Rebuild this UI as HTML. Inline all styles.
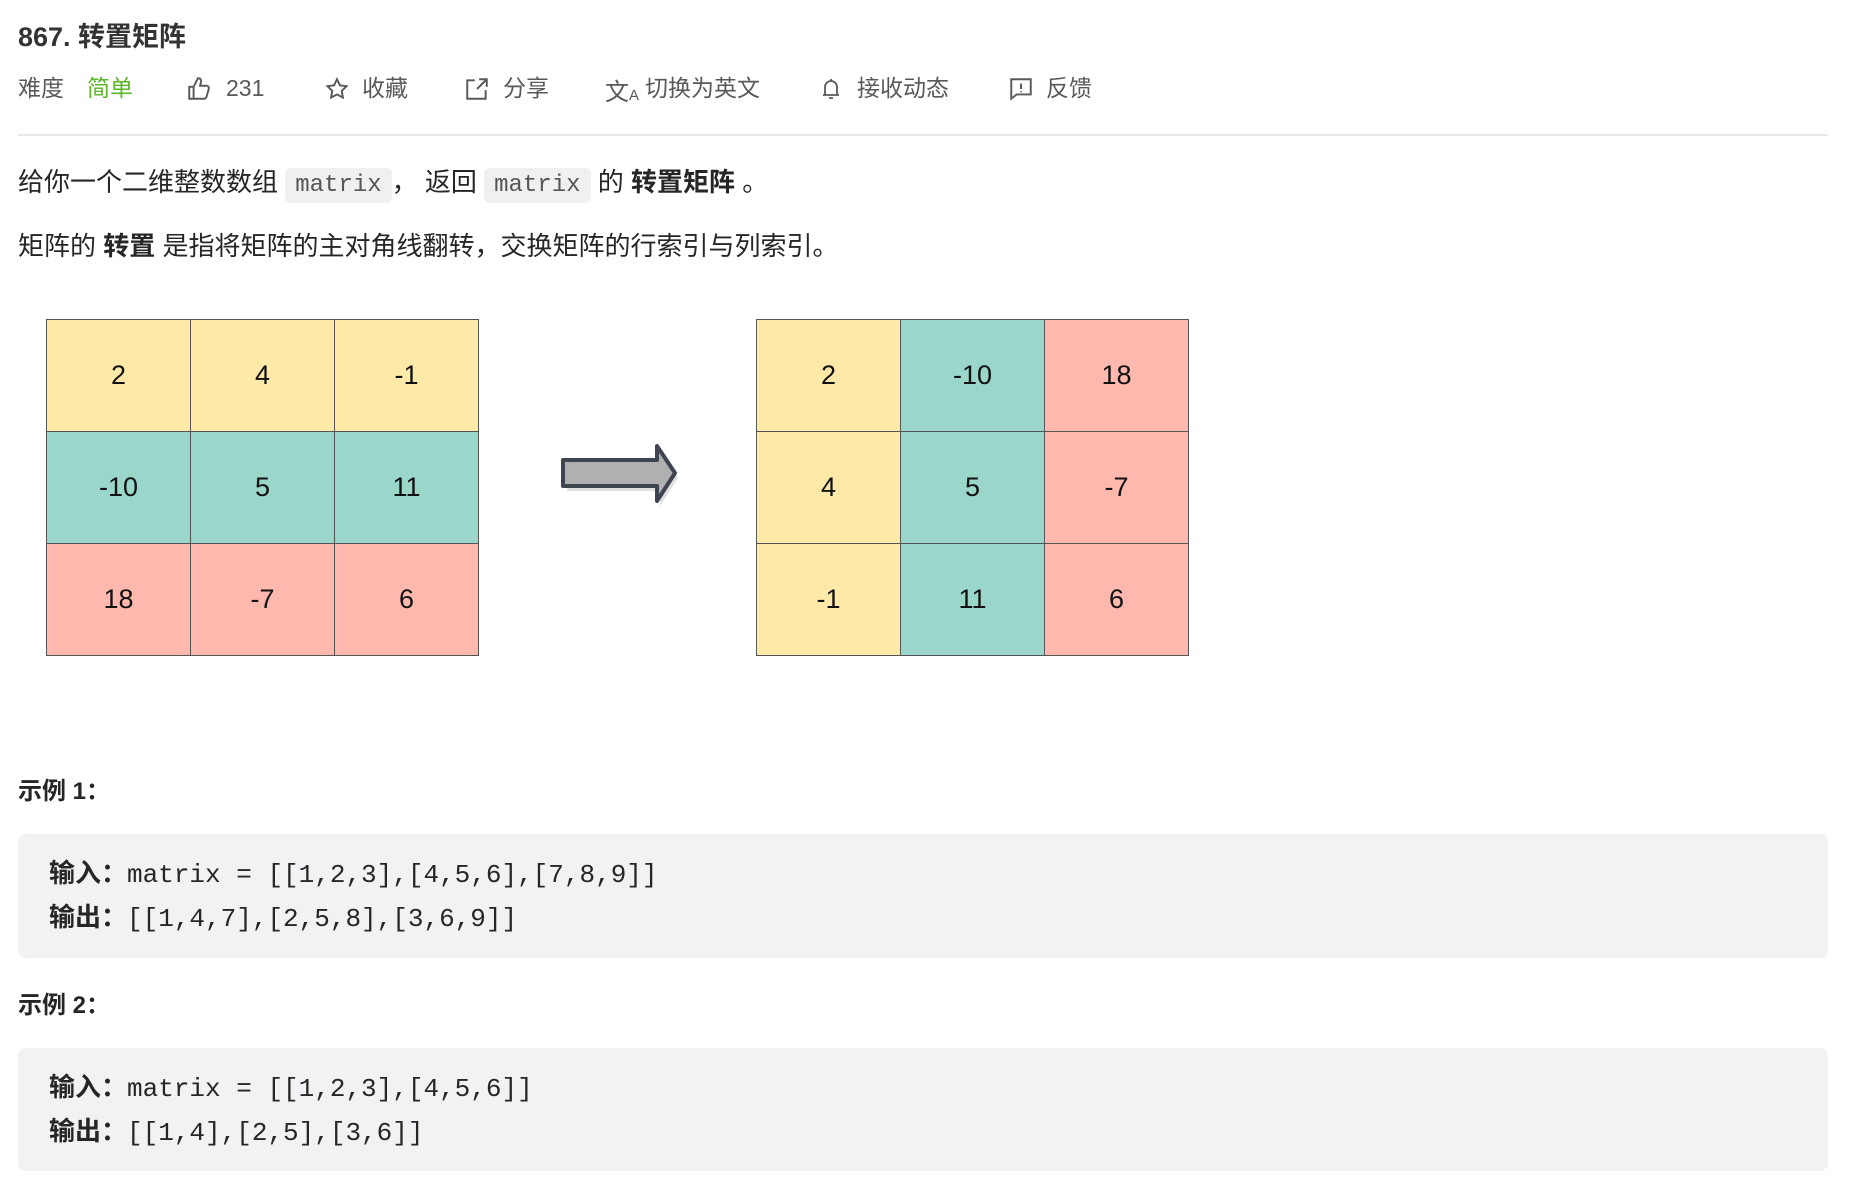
<!DOCTYPE html>
<html><head><meta charset="utf-8"><style>
*{margin:0;padding:0;box-sizing:border-box}
body{width:1852px;height:1192px;background:#fff;position:relative;overflow:hidden;font-family:"Liberation Sans","Noto Sans CJK SC",sans-serif;color:#262626}
.a{position:absolute;white-space:nowrap}
.meta{top:72px;font-size:23px;color:#595959;line-height:32px}
.ic{position:absolute;top:76px}
code{font-family:"Liberation Mono",monospace;background:#f0f0f2;color:#555;border-radius:6px;padding:4px 10px;font-size:24px}
.p{font-size:26px;line-height:36px}
.cell{position:absolute;border:1px solid #555;display:flex;align-items:center;justify-content:center;font-size:27px;color:#111}
.y{background:#fee9a8}.g{background:#9bd6cb}.r{background:#feb8ad}
.pre{position:absolute;left:18px;width:1810px;background:#f2f2f4;border-radius:8px;font-family:"Liberation Mono",monospace;font-size:26px;line-height:42px;padding:0 31px;color:#262626}
.pre b{font-family:"Liberation Sans","Noto Sans CJK SC",sans-serif;font-weight:700}
h4{font-size:24px;font-weight:700}
</style></head><body>
<div class="a" style="left:18px;top:15px;font-size:27px;font-weight:700;color:#333">867. 转置矩阵</div>
<div class="a meta" style="left:18px">难度</div>
<div class="a meta" style="left:87px;color:#5ab726">简单</div>
<svg class="ic" style="left:186px" width="26" height="26" viewBox="0 0 24 24" fill="none" stroke="#595959" stroke-width="1.8"><path d="M3 10h4v11H3zM7 10l4-8c2 0 3 1 3 3l-1 4h6c1.5 0 2.5 1.3 2 3l-2 7c-.4 1.3-1.3 2-2.5 2H7"/></svg>
<div class="a meta" style="left:226px">231</div>
<svg class="ic" style="left:324px" width="26" height="26" viewBox="0 0 24 24" fill="none" stroke="#595959" stroke-width="1.8"><path d="M12 3l2.7 5.6 6.1.8-4.4 4.3 1 6.1L12 17l-5.4 2.8 1-6.1-4.4-4.3 6.1-.8z"/></svg>
<div class="a meta" style="left:362px">收藏</div>
<svg class="ic" style="left:464px" width="26" height="26" viewBox="0 0 24 24" fill="none" stroke="#595959" stroke-width="1.8"><path d="M10 4H3v17h17v-8M14 3h7v7M21 3l-9 9"/></svg>
<div class="a meta" style="left:503px">分享</div>
<div class="a" style="left:605px;top:72px;font-size:24px;color:#595959">文<span style="font-size:15px">A</span></div>
<div class="a meta" style="left:645px">切换为英文</div>
<svg class="ic" style="left:819px" width="24" height="26" viewBox="0 0 24 24" fill="none" stroke="#595959" stroke-width="1.8"><path d="M6 18V10a6 6 0 0112 0v8M4 18h16M10 21h4M12 2v2"/></svg>
<div class="a meta" style="left:857px">接收动态</div>
<svg class="ic" style="left:1008px" width="26" height="26" viewBox="0 0 24 24" fill="none" stroke="#595959" stroke-width="1.8"><path d="M3 3h18v14H8l-5 4zM12 7v5M12 14v1"/></svg>
<div class="a meta" style="left:1046px">反馈</div>
<div class="a" style="left:18px;top:134px;width:1810px;height:2px;background:#e8e8e8"></div>
<div class="a p" style="left:18px;top:164px">给你一个二维整数数组 <code>matrix</code>， 返回 <code>matrix</code> 的 <b>转置矩阵</b> 。</div>
<div class="a p" style="left:18px;top:228px">矩阵的 <b>转置</b> 是指将矩阵的主对角线翻转，交换矩阵的行索引与列索引。</div>

<div class="cell y" style="left:46px;top:319px;width:145px;height:113px">2</div>
<div class="cell y" style="left:190px;top:319px;width:145px;height:113px">4</div>
<div class="cell y" style="left:334px;top:319px;width:145px;height:113px">-1</div>
<div class="cell g" style="left:46px;top:431px;width:145px;height:113px">-10</div>
<div class="cell g" style="left:190px;top:431px;width:145px;height:113px">5</div>
<div class="cell g" style="left:334px;top:431px;width:145px;height:113px">11</div>
<div class="cell r" style="left:46px;top:543px;width:145px;height:113px">18</div>
<div class="cell r" style="left:190px;top:543px;width:145px;height:113px">-7</div>
<div class="cell r" style="left:334px;top:543px;width:145px;height:113px">6</div>

<svg class="a" style="left:555px;top:440px" width="130" height="70" viewBox="0 0 130 70"><path d="M10 22h93V8l18 27-18 28V48H10z" fill="#000" opacity=".12" transform="translate(2,3)"/><path d="M8 20h94V6l18 27-18 28V46H8z" fill="#b0b0b0" stroke="#3f4550" stroke-width="4" stroke-linejoin="round"/></svg>

<div class="cell y" style="left:756px;top:319px;width:145px;height:113px">2</div>
<div class="cell g" style="left:900px;top:319px;width:145px;height:113px">-10</div>
<div class="cell r" style="left:1044px;top:319px;width:145px;height:113px">18</div>
<div class="cell y" style="left:756px;top:431px;width:145px;height:113px">4</div>
<div class="cell g" style="left:900px;top:431px;width:145px;height:113px">5</div>
<div class="cell r" style="left:1044px;top:431px;width:145px;height:113px">-7</div>
<div class="cell y" style="left:756px;top:543px;width:145px;height:113px">-1</div>
<div class="cell g" style="left:900px;top:543px;width:145px;height:113px">11</div>
<div class="cell r" style="left:1044px;top:543px;width:145px;height:113px">6</div>

<h4 class="a" style="left:18px;top:771px">示例 1：</h4>
<div class="pre" style="top:834px;height:124px;padding-top:18px"><b>输入：</b>matrix = [[1,2,3],[4,5,6],[7,8,9]]<br><b>输出：</b>[[1,4,7],[2,5,8],[3,6,9]]</div>
<h4 class="a" style="left:18px;top:985px">示例 2：</h4>
<div class="pre" style="top:1048px;height:123px;padding-top:18px"><b>输入：</b>matrix = [[1,2,3],[4,5,6]]<br><b>输出：</b>[[1,4],[2,5],[3,6]]</div>
</body></html>
